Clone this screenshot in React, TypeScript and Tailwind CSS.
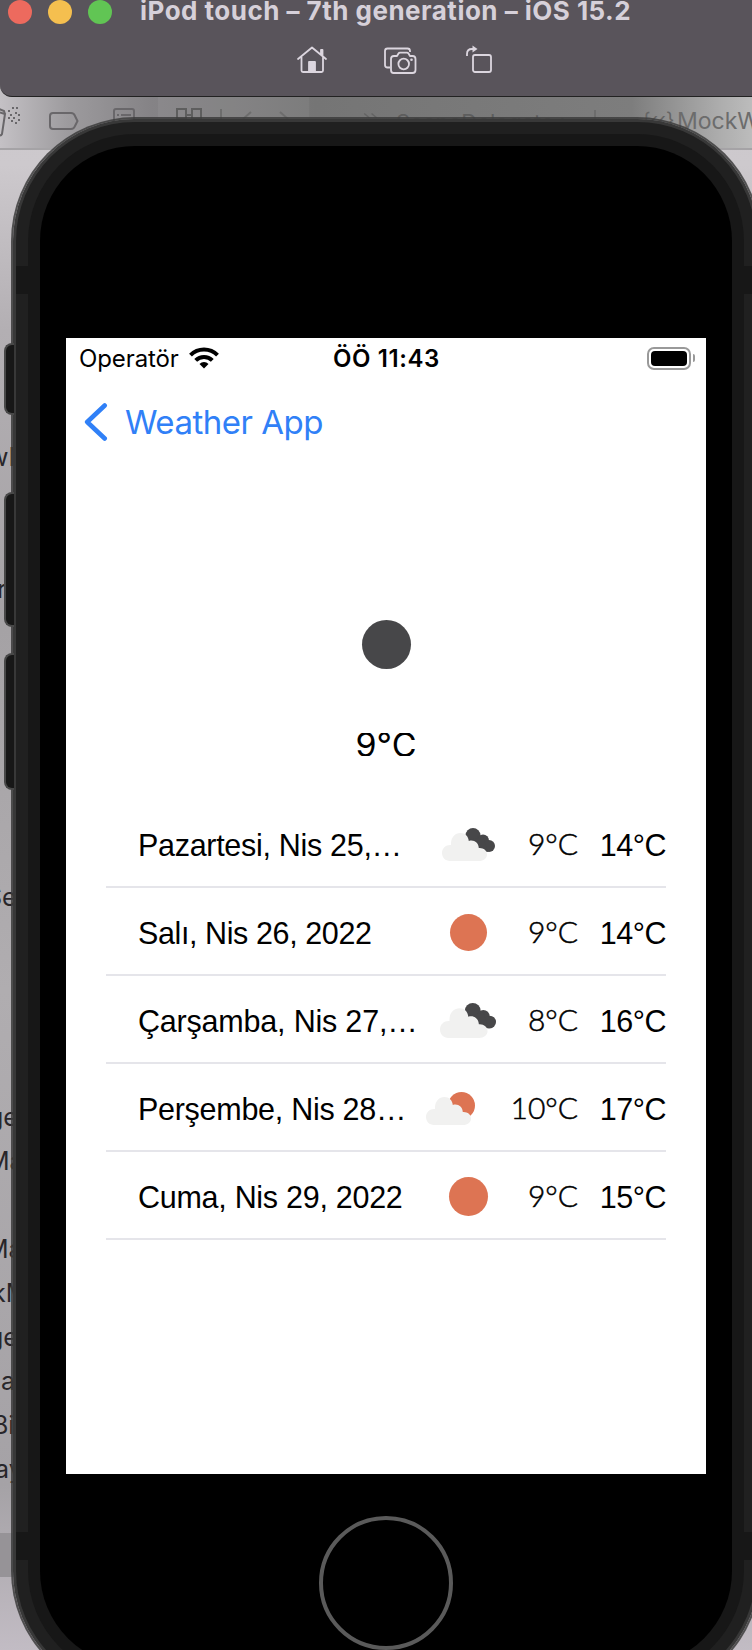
import type { ReactNode } from "react";

type Sky = "clouds" | "sun" | "partly";

const days: { date: string; sky: Sky; low: string; high: string; size: string; track: string }[] = [
  { date: "Pazartesi, Nis 25,…", sky: "clouds", low: "9°C", high: "14°C", size: "w-[53px] h-[33px]", track: "tracking-[-0.3px]" },
  { date: "Salı, Nis 26, 2022", sky: "sun", low: "9°C", high: "14°C", size: "w-[37px] h-[37px]", track: "tracking-[-0.4px]" },
  { date: "Çarşamba, Nis 27,…", sky: "clouds", low: "8°C", high: "16°C", size: "w-[56px] h-[35px]", track: "tracking-[-0.2px]" },
  { date: "Perşembe, Nis 28…", sky: "partly", low: "10°C", high: "17°C", size: "w-[49px] h-[33px]", track: "tracking-[-0.28px]" },
  { date: "Cuma, Nis 29, 2022", sky: "sun", low: "9°C", high: "15°C", size: "w-[39px] h-[39px]", track: "tracking-[-0.28px]" },
];

const lines: [string, string][] = [
  ["wM", "-ml-[12px]"], ["", ""], ["", ""], ["r", "-ml-[3px]"], ["", ""], ["", ""], ["", ""], ["", ""], ["", ""], ["", ""],
  ["Se", "-ml-[14px]"], ["", ""], ["", ""], ["", ""], ["", ""], ["ge", "-ml-[12px]"], ["Ma", "-ml-[13px]"], ["", ""],
  ["Ma", "-ml-[14px]"], ["kM", "-ml-[8px]"], ["ge", "-ml-[12px]"], ["a", "ml-[1px]"], ["Bi", "-ml-[8px]"], ["ay", "-ml-[5px]"],
];

function SkyIcon({ sky, size }: { sky: Sky; size: string }) {
  if (sky === "sun") return <div className={`shrink-0 rounded-full bg-[#dd7453] ${size}`} />;
  const cloud = (
    <path
      fill="#f1f1f0"
      d="M8 33C3.300 33 0 29.400 0 25c0-5 4-8.400 9-8C8.500 9.500 13 5 18.500 5c4.500 0 7.800 3.200 8.300 8 5-1.600 9.600 1.500 10 7 4.500-.4 8.200 2.500 8.200 6.500S41.500 33 37 33Z"
    />
  );
  if (sky === "clouds")
    return (
      <svg viewBox="0 0 53 33" preserveAspectRatio="none" className={`shrink-0 ${size}`}>
        <g fill="#474749">
          <circle cx="31" cy="7.500" r="7.500" />
          <circle cx="41" cy="12.500" r="6" />
          <circle cx="47" cy="18" r="6" />
          <path d="M27 12 41 9l5 15-11-3Z" />
        </g>
        {cloud}
      </svg>
    );
  return (
    <svg viewBox="0 0 49 33" preserveAspectRatio="none" className={`shrink-0 ${size}`}>
      <circle cx="35.500" cy="13.500" r="13.500" fill="#dd7453" />
      {cloud}
    </svg>
  );
}

function StatusBar() {
  return (
    <div className="flex h-10 items-center pl-[13px] pr-[11px] font-[Inter] text-[24px] text-black">
      <div className="flex w-[254px] items-center gap-[10px]">
        <span className="pt-[2px] tracking-[-0.1px]">Operatör</span>
        <svg viewBox="0 0 30 22" className="h-[22px] w-[30px]" fill="none" stroke="#000" strokeWidth="4">
          <path d="M1.500 8.200a19 19 0 0 1 27 0" />
          <path d="M6.700 13.400a11.700 11.700 0 0 1 16.600 0" />
          <path d="m15 21.500-4.500-4.600a6.500 6.500 0 0 1 9 0Z" fill="#000" stroke="none" />
        </svg>
      </div>
      <span className="whitespace-nowrap pt-[2px] font-semibold tracking-[0.6px]">ÖÖ 11:43</span>
      <div className="ml-auto flex items-center gap-[2px]">
        <div className="flex h-[23px] w-[44px] rounded-[7px] border-2 border-[#999] p-[2px]">
          <div className="flex-1 rounded-[4px] bg-black" />
        </div>
        <div className="h-[8px] w-[2px] rounded-r-full bg-[#999]" />
      </div>
    </div>
  );
}

function Screen() {
  return (
    <div className="flex h-[1136px] w-[640px] flex-col bg-white">
      <StatusBar />
      <div className="flex h-[88px] items-center gap-[17px] pl-[18px] text-[#3080f7]">
        <svg viewBox="0 0 24 40" className="h-10 w-6" fill="none" stroke="currentColor" strokeWidth="4.600" strokeLinecap="round" strokeLinejoin="round">
          <path d="M20.700 3.500 3.200 20l17.500 16.500" />
        </svg>
        <span className="pt-[2px] font-[Inter] text-[33px] tracking-[-0.5px]">Weather App</span>
      </div>
      <div className="mt-[154px] flex flex-col items-center">
        <div className="h-[49px] w-[49px] rounded-full bg-[#474749]" />
        <div className="mt-[64px] flex h-[23px] items-center overflow-hidden font-[Inter] text-[34px] leading-[23px]">9°C</div>
      </div>
      <div className="ml-10 mt-[44px] w-[560px]">
        {days.map((d) => (
          <div key={d.date} className="flex h-[88px] items-center border-b-2 border-[#e5e5ea] pl-8 pt-[3px]">
            <span className={`w-[284px] whitespace-nowrap pt-[2px] font-['Liberation_Sans'] text-[30.500px] ${d.track}`}>{d.date}</span>
            <div className="flex min-w-0 flex-1 items-center justify-between">
              <div className={`flex w-[92px] justify-center ${d.sky === "partly" ? "-ml-[18px]" : ""}`}>
                <SkyIcon sky={d.sky} size={d.size} />
              </div>
              <span className="whitespace-nowrap pb-[3px] font-[Lato] text-[30px] font-light [-webkit-text-stroke:0.5px_#000]">{d.low}</span>
            </div>
            <span className="w-[88px] pt-[2px] text-right font-['Liberation_Sans'] text-[30.500px] tracking-[-0.5px]">{d.high}</span>
          </div>
        ))}
      </div>
    </div>
  );
}

function SideButton({ place }: { place: string }) {
  return (
    <div className={`absolute left-[4px] w-[10px] rounded-l-[8px] border-y-2 border-l-2 border-[#484848] bg-[#171717] ${place}`} />
  );
}

function Notch({ place }: { place: string }) {
  return <div className={`absolute h-[28px] w-[12px] bg-[#171717] ${place}`} />;
}

function Phone({ children }: { children: ReactNode }) {
  return (
    <>
      <div className="absolute left-[11px] top-[117px] h-[1578px] w-[750px] rounded-[124px] border-2 border-[#3c3c3c]/85 bg-[#383838] bg-clip-padding p-[3px]">
        <div className="h-full rounded-[119px] bg-[#202020] p-[12px]">
          <div className="h-full rounded-[107px] bg-[#171717] p-[12px]">
            <div className="flex h-full flex-col items-center rounded-[95px] bg-black pt-[192px]">
              {children}
              <div className="mt-[42px] h-[134px] w-[134px] shrink-0 rounded-full border-4 border-[#5a5a5a]" />
            </div>
          </div>
        </div>
        <Notch place="left-[3px] top-[147px]" />
        <Notch place="right-[3px] top-[147px]" />
        <Notch place="left-[3px] top-[1413px]" />
        <Notch place="right-[3px] top-[1413px]" />
      </div>
      <SideButton place="top-[343px] h-[72px]" />
      <SideButton place="top-[492px] h-[135px]" />
      <SideButton place="top-[653px] h-[137px]" />
    </>
  );
}

function Titlebar() {
  return (
    <header className="relative flex h-[97px] flex-col rounded-bl-[12px] border-b border-[#222] bg-[#59545b]">
      <div className="flex h-6 items-center">
        <div className="flex gap-4 pl-2">
          <span className="h-6 w-6 rounded-full bg-[#ed6a5e]" />
          <span className="h-6 w-6 rounded-full bg-[#f5bf4f]" />
          <span className="h-6 w-6 rounded-full bg-[#61c554]" />
        </div>
        <h1 className="ml-[28px] whitespace-nowrap pb-[3px] font-[Inter] text-[26px] font-bold leading-6 tracking-[0.48px] text-[#d6d0d9]">
          iPod touch – 7th generation – iOS 15.2
        </h1>
      </div>
      <div className="mt-[20px] flex items-center text-[#dcd6df]">
        <svg viewBox="0 0 32 32" className="ml-[296px] h-8 w-8" fill="none" stroke="currentColor" strokeWidth="1.800" strokeLinecap="round" strokeLinejoin="round">
          <path d="M2 15 16 3.500 30 15M26.500 11.500V6h-1.500v4M5.500 13v13.500q0 1.500 1.500 1.500h18.500q1.500 0 1.500-1.500V13" />
          <path d="M13 28V18h6v10Z" fill="currentColor" />
        </svg>
        <svg viewBox="0 0 34 32" className="ml-[55px] h-8 w-[34px]" fill="none" stroke="currentColor" strokeWidth="1.800" strokeLinejoin="round">
          <path d="M7 23.500H4.500q-2.500 0-2.500-2.500V7q0-2.500 2.500-2.500h20q2.500 0 2.500 2.500v1" />
          <path d="M11 12h3l1.500-2.500q.5-.8 1.500-.8h7q1 0 1.500.8L27 12h2.500q3 0 3 3v11q0 3-3 3h-19q-2.500 0-2.500-3V15q0-3 3-3Z" />
          <circle cx="20.700" cy="20" r="5.300" />
          <circle cx="28.500" cy="15.700" r="1.300" fill="currentColor" stroke="none" />
        </svg>
        <svg viewBox="0 0 28 32" className="ml-[48px] h-8 w-7" fill="none" stroke="currentColor" strokeWidth="1.800">
          <rect x="8" y="11" width="18" height="17" rx="2" />
          <path d="M2 12V10q0-5 5-5h2" />
          <path d="m7.500 1.500 5 3.500-5 3.500Z" fill="currentColor" stroke="none" />
        </svg>
      </div>
    </header>
  );
}

function Editor() {
  return (
    <div className="absolute inset-0 flex flex-col overflow-hidden bg-[linear-gradient(180deg,#c9c5ca_0%,#cdc9cd_10%,#b3afb3_20%,#a5a2a5_38%,#b0adb0_60%,#a5a2a6_90%,#c2bcc4_100%)]">
      <div className="h-[150px] shrink-0 border-b-2 border-[#a5a3a6] bg-[linear-gradient(90deg,#c4c1c5_0%,#9d9b9e_9%,#858386_20%,#757575_42%,#7d7d7d_84%,#aeaeae_96%,#bcbcbc_100%)] pt-[97px] text-[#616062]">
        <div className="flex h-[50px] items-start">
          <svg viewBox="0 0 158 50" className="h-[50px] w-[158px] shrink-0" fill="none" stroke="#69676a" strokeWidth="2">
            <path d="M-5 14 5 17l-3 20q-1 2-3 1l-6-2M5 17l-1-3-5-2" />
            <path d="M8 14h2M12 11h2M16 11h2M10 18h2M15 16h2M8 21h2M13 21h2M18 18h2M15 26h2M11 24h2M18 23h2" />
            <path d="M53 16h18q3 0 4 3l2.500 5-2.500 5q-1 3-4 3H53q-3 0-3-3V19q0-3 3-3Z" />
            <rect x="114" y="12" width="20" height="20" rx="2" />
            <path d="M117 18h2M121 18h10" />
          </svg>
          <div className="flex h-full w-[152px] shrink-0 border-r border-[#777] bg-white/5">
            <svg viewBox="0 0 152 50" className="h-[50px] w-[152px] shrink-0" fill="none" stroke="#5e5e5e" strokeWidth="2">
              <path d="M19 12h9v10h-9ZM34 12h9v10h-9ZM28 18h6" />
              <path d="M63 12v20" stroke="#6d6d6d" />
              <path d="m93 15-8 7M122 15l8 7" stroke="#6d6d6d" />
            </svg>
          </div>
          <svg viewBox="0 0 30 30" className="ml-[52px] h-[30px] w-[22px] shrink-0" fill="none" stroke="#646464" strokeWidth="2">
            <path d="m3 17 7 6M13 17l7 6" />
          </svg>
          <span className="ml-[12px] mt-[9px] w-[198px] shrink-0 font-[Inter] text-[22px] text-[#5d5d5d]">SceneDelegate ›</span>
          <span className="mt-[13px] h-[12px] w-[2px] shrink-0 bg-[#6d6d6d]" />
          <span className="ml-[46px] mt-[8px] w-[27px] shrink-0 whitespace-nowrap font-[Inter] text-[20px] text-[#656565]">{"{‹‹}"}</span>
          <span className="ml-[8px] mt-[7px] whitespace-nowrap font-[Inter] text-[23px] text-[#6c6c6c]">MockW</span>
        </div>
      </div>
      <div className="mt-[285px] flex flex-col">
        {lines.map(([text, shift], i) => (
          <div key={i} className="h-11 w-4 overflow-hidden whitespace-nowrap font-[Inter] text-[25px] leading-[44px] text-[#28262a]">
            <div className={shift}>{text}</div>
          </div>
        ))}
      </div>
      <div className="mt-[42px] h-11 w-full shrink-0 bg-[#969397]" />
    </div>
  );
}

export default function App() {
  return (
    <main className="relative h-[1650px] w-[752px] overflow-hidden bg-[#b5b2b6]">
      <Editor />
      <Titlebar />
      <Phone>
        <Screen />
      </Phone>
    </main>
  );
}
